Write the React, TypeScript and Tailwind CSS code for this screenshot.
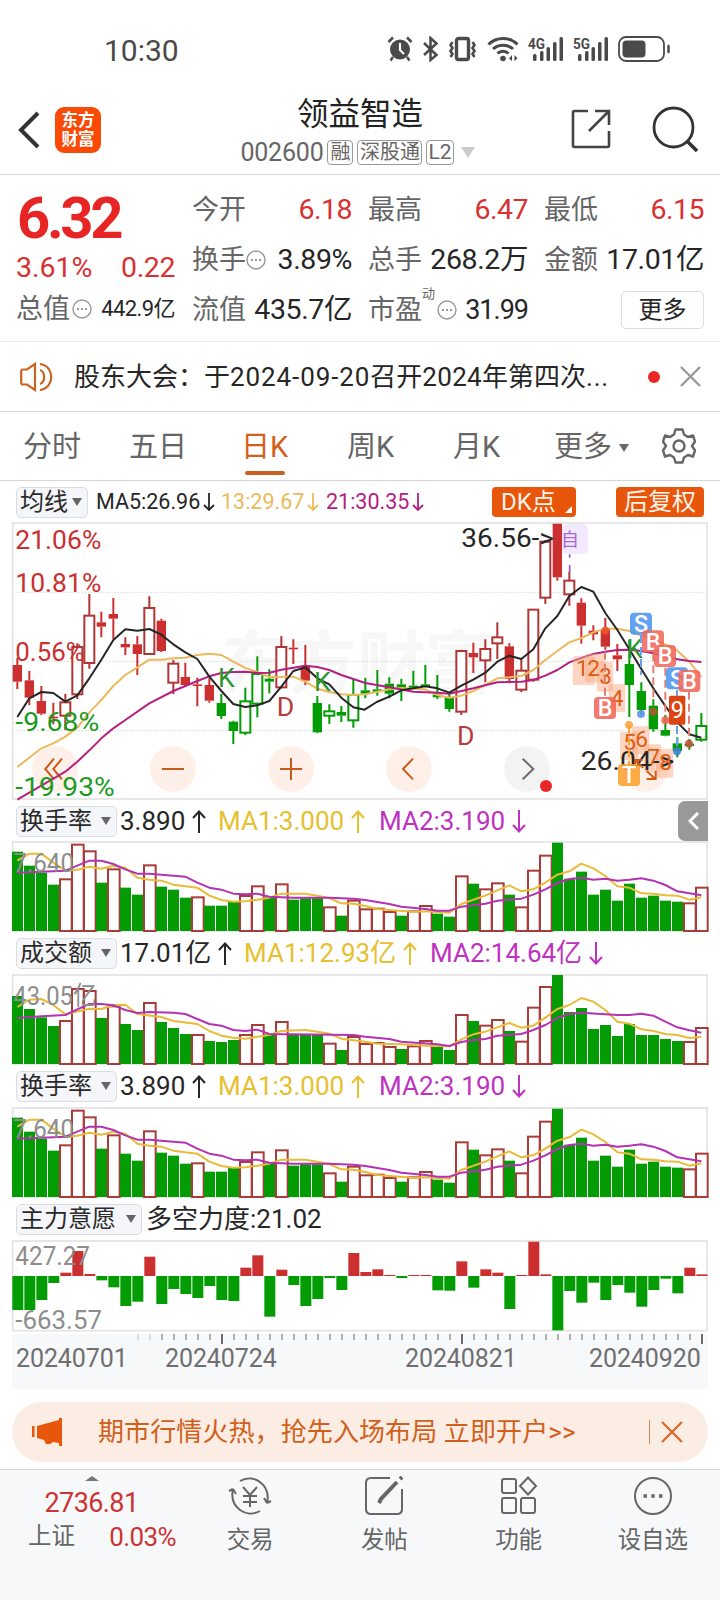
import type { ReactNode } from 'react';

const RED = '#cc2f2f';
const HOLLOW_RED = '#a83c3a';
const GREEN = '#049c04';

// Drawing units: three per pixel, one slot of 36 per trading day
const STEP = 36;
const FIRST = 52;

type Kind = 'r' | 'R' | 'g' | 'G';
type Candle = [number, number, number, number, Kind];

// high, body top, body bottom, low; capital kind = hollow body
const candles: Candle[] = [
  [428, 450, 500, 522, 'r'], [468, 496, 548, 570, 'r'], [513, 558, 596, 600, 'r'], [563, 605, 610, 628, 'r'],
  [537, 562, 602, 645, 'R'], [385, 396, 538, 552, 'R'], [237, 302, 444, 461, 'R'], [290, 322, 335, 367, 'r'],
  [249, 297, 311, 372, 'r'], [367, 387, 397, 420, 'r'], [363, 388, 417, 480, 'r'], [244, 279, 417, 418, 'R'],
  [311, 317, 408, 411, 'r'], [435, 446, 503, 537, 'R'], [443, 486, 510, 514, 'r'], [488, 508, 513, 574, 'r'],
  [490, 510, 557, 563, 'r'], [537, 564, 603, 612, 'g'], [617, 620, 648, 687, 'g'], [518, 559, 653, 660, 'G'],
  [424, 477, 566, 607, 'G'], [463, 491, 500, 535, 'g'], [363, 396, 517, 520, 'R'], [373, 398, 403, 447, 'r'],
  [390, 455, 497, 510, 'r'], [543, 564, 652, 655, 'g'], [568, 589, 602, 627, 'G'], [573, 591, 602, 621, 'g'],
  [490, 540, 616, 638, 'G'], [488, 526, 536, 550, 'g'], [465, 523, 531, 542, 'g'], [487, 506, 536, 550, 'g'],
  [491, 508, 519, 558, 'g'], [467, 512, 519, 521, 'g'], [450, 508, 514, 517, 'g'], [480, 539, 547, 552, 'g'],
  [535, 546, 582, 590, 'g'], [404, 408, 590, 600, 'R'], [383, 414, 427, 474, 'r'], [373, 402, 436, 502, 'R'],
  [322, 367, 385, 432, 'R'], [385, 394, 492, 505, 'r'], [430, 467, 524, 531, 'R'], [282, 284, 494, 500, 'R'],
  [75, 80, 248, 267, 'R'], [26, 26, 187, 197, 'r'], [170, 197, 238, 272, 'R'], [250, 263, 332, 386, 'r'],
  [331, 347, 358, 376, 'r'], [309, 343, 395, 404, 'r'], [387, 421, 433, 468, 'r'], [375, 447, 510, 606, 'g'],
  [502, 528, 585, 600, 'g'], [553, 572, 643, 650, 'g'], [600, 645, 662, 664, 'g'], [667, 685, 708, 727, 'g'],
  [672, 686, 693, 704, 'g'], [594, 633, 674, 680, 'G'],
];

const ma5 =
  '52,606 88,550 124,531 160,534 196,560 232,541 268,490 304,434 340,375 376,343 412,347 448,342 484,359 520,388 556,412 592,432 628,485 664,528 700,567 736,576 772,571 808,558 844,515 880,468 916,457 952,490 988,508 1024,548 1060,577 1094,584 1130,561 1168,545 1204,526 1240,520 1276,514 1312,520 1348,533 1384,512 1420,494 1456,473 1492,440 1528,422 1564,432 1600,403 1636,340 1672,303 1708,243 1744,216 1780,230 1816,294 1852,345 1888,403 1924,462 1960,520 1996,573 2032,622 2068,658 2104,668';
const ma13 =
  '52,756 124,700 160,685 196,665 232,638 268,592 304,555 340,513 376,480 412,457 448,434 484,434 520,430 556,428 592,420 628,416 664,420 700,440 736,459 772,471 808,486 880,485 916,500 952,521 988,531 1024,538 1060,540 1096,538 1168,523 1204,519 1276,523 1312,540 1348,548 1384,542 1420,528 1492,490 1528,487 1564,483 1600,465 1636,435 1672,408 1708,382 1744,369 1780,352 1816,341 1852,341 1888,348 1924,362 1996,388 2032,407 2068,440 2104,486';
const ma21 =
  '52,854 196,770 232,740 268,706 304,670 340,640 376,615 448,565 520,528 592,498 628,484 664,474 700,471 736,470 772,474 808,473 844,464 880,458 916,452 952,456 988,465 1024,480 1096,504 1168,517 1240,530 1312,533 1348,536 1420,520 1492,502 1564,500 1600,495 1636,482 1672,465 1708,442 1744,429 1780,417 1816,410 1852,405 1888,404 1924,408 1960,415 1996,425 2032,433 2068,438 2104,441';

const volumeKinds = 'ggggRRRgRggRgggRgggRRgRgggRgRRRRgRRggRgRRgRRRgggggggggggRR';

const turnoverTops = [
  171, 213, 234, 270, 254, 150, 170, 264, 224, 279, 300, 212, 276, 285, 309, 308, 333, 333, 322, 304, 275, 307, 269, 315,
  311, 311, 338, 363, 318, 344, 342, 352, 363, 350, 334, 357, 366, 245, 267, 284, 266, 300, 338, 228, 183, 144, 252, 231,
  300, 285, 318, 267, 309, 303, 318, 321, 326, 279,
];
const turnoverMa1 =
  '52,198 88,177 124,177 160,204 196,228 232,225 268,216 304,222 340,213 376,219 412,249 448,255 484,258 520,270 556,275 592,279 628,303 664,316 700,321 736,320 772,315 808,309 844,297 916,297 952,303 988,310 1024,326 1060,327 1096,334 1132,343 1168,346 1240,351 1276,350 1348,354 1384,328 1456,303 1492,287 1528,272 1564,290 1600,284 1636,264 1672,240 1708,230 1744,207 1780,221 1816,244 1852,275 1888,279 1924,296 1960,297 1996,302 2032,303 2068,315 2104,308';
const turnoverMa2 =
  '52,234 196,228 232,213 268,198 304,198 340,208 376,224 412,237 448,237 556,246 592,264 628,279 664,285 700,297 736,299 772,297 808,306 880,309 988,309 1060,312 1096,316 1132,322 1168,328 1204,336 1276,343 1312,348 1348,348 1384,336 1420,332 1456,327 1492,318 1564,312 1600,300 1636,284 1672,265 1708,253 1744,249 1780,255 1816,252 1852,258 1888,255 1924,251 1960,258 1996,271 2032,290 2104,302';

const amountTops = [
  603, 642, 667, 693, 678, 582, 588, 669, 634, 687, 705, 624, 681, 699, 717, 720, 738, 741, 735, 720, 690, 718, 681, 718,
  718, 719, 746, 765, 726, 747, 744, 756, 762, 754, 738, 756, 765, 660, 678, 692, 675, 708, 740, 638, 576, 540, 651, 639,
  702, 690, 723, 687, 720, 720, 732, 738, 741, 699,
];
const amountMa1 =
  '52,636 88,614 124,612 160,630 196,658 268,641 304,642 340,630 376,629 412,657 484,666 520,678 592,687 628,708 664,722 700,728 736,731 808,720 844,708 916,705 952,710 988,716 1024,731 1096,740 1132,746 1204,748 1276,752 1348,754 1384,733 1420,718 1456,710 1492,697 1528,684 1564,698 1600,692 1636,668 1672,642 1708,630 1744,609 1780,620 1816,645 1852,680 1888,686 1924,703 1960,708 1996,717 2032,720 2068,729 2104,725';
const amountMa2 =
  '52,669 124,664 196,660 232,643 268,627 304,627 340,631 376,645 412,654 448,651 520,653 556,657 592,672 628,687 664,692 700,705 736,708 772,704 808,717 1060,720 1096,725 1168,732 1204,740 1312,748 1348,753 1384,741 1420,735 1456,732 1492,722 1564,717 1600,705 1636,690 1672,669 1708,657 1744,653 1852,660 1888,660 1924,656 1960,662 1996,680 2032,697 2068,706 2104,713';

const forceEnds = [
  330, 330, 300, 249, 218, 153, 222, 241, 262, 318, 305, 170, 312, 267, 282, 294, 258, 300, 303, 203, 166, 350, 209, 255,
  318, 297, 234, 270, 159, 216, 208, 225, 234, 225, 225, 271, 272, 184, 263, 208, 218, 327, 225, 125, 223, 391, 273, 308,
  248, 300, 255, 278, 320, 270, 236, 280, 203, 223,
];

function Frame({ y, height }: { y: number; height: number }) {
  return <rect x={38} y={y} width={2083} height={height} fill="none" stroke="#e3e3e3" strokeWidth={5} />;
}

function Label({ x, y, w, size = 80, fill, children }: { x: number; y: number; w?: number; size?: number; fill: string; children: string }) {
  return (
    <text x={x} y={y} fill={fill} fontSize={size} textLength={w} lengthAdjust="spacingAndGlyphs">
      {children}
    </text>
  );
}

function Badge({ x, y, fill, children }: { x: number; y: number; fill: string; children: string }) {
  return (
    <g>
      <rect x={x} y={y} width={66} height={66} rx={12} fill={fill} opacity={0.88} />
      <text x={x + 33} y={y + 58} fill="#fff" fontSize={70} fontWeight={500} textAnchor="middle">
        {children}
      </text>
    </g>
  );
}

function Line({ points, color, width = 6 }: { points: string; color: string; width?: number }) {
  return <polyline points={points} fill="none" stroke={color} strokeWidth={width} strokeLinejoin="round" />;
}

const counts: [number, number, number, number, string][] = [
  [1718, 424, 66, 86, '1'],
  [1755, 416, 60, 86, '2'],
  [1790, 440, 50, 90, '3'],
  [1826, 508, 50, 84, '4'],
  [1860, 650, 54, 84, '5'],
  [1896, 634, 52, 84, '6'],
  [1932, 688, 52, 84, '7'],
  [1968, 702, 52, 86, '8'],
];

const countText: [number, number][] = [
  [1728, 484], [1762, 482], [1798, 508], [1832, 572], [1870, 706], [1906, 696], [1942, 750], [1978, 766],
];

const dots: [number, number, string][] = [
  [1816, 347, '#f0502f'],
  [1887, 630, '#fda43a'],
  [1923, 597, '#5b97e8'],
  [1960, 590, '#b4572f'],
  [1996, 616, '#ea6a55'],
  [2031, 709, '#3b84d8'],
  [2067, 686, '#c0563c'],
];

function KLineChart() {
  return (
    <svg className="block h-[276px] w-[696px] overflow-visible" viewBox="36 24 2088 828">
      <text x={664} y={520} fontSize={205} fontWeight={700} fill="#f7f7f7" textLength={815}>东方财富</text>
      {[232, 439, 647].map((y) => (
        <line key={y} x1={38} x2={2121} y1={y} y2={y} stroke="#d4d4d4" strokeWidth={3} strokeDasharray="4 5" />
      ))}
      <Frame y={24} height={828} />
      {[165, 519, 873, 1227, 1581, 1935].map((cx) => (
        <circle key={cx} cx={cx} cy={762} r={69} fill={cx === 1581 ? '#f3f3f3' : '#fef0e8'} />
      ))}

      {candles.map(([high, top, bottom, low, kind], i) => {
        const x = FIRST + i * STEP;
        const hollow = kind === 'R' || kind === 'G';
        const color = kind === 'R' ? '#b03535' : kind === 'r' ? RED : GREEN;
        return (
          <g key={i} stroke={color}>
            <path d={`M${x} ${high}V${top}M${x} ${bottom}V${low}`} strokeWidth={6} />
            {hollow ? (
              <rect x={x - 15} y={top} width={30} height={bottom - top} fill="#fff" strokeWidth={6} />
            ) : (
              <rect x={x - 14} y={top} width={28} height={bottom - top} fill={color} stroke="none" />
            )}
          </g>
        );
      })}

      <g fill="none" stroke="#c85a1d" strokeWidth={6}>
        <path d="M162 731L136 762L162 793M186 731L160 762L186 793" />
        <path d="M486 762H552" />
        <path d="M840 762H906M873 729V795" />
        <path d="M1239 731L1209 762L1239 793" />
        <path d="M1568 731L1600 762L1568 793" stroke="#6b6b6b" />
      </g>
      <circle cx={1638} cy={813} r={18} fill="#ea2626" />

      <Line points={ma13} color="#ecb95c" />
      <Line points={ma21} color="#b5207f" />
      <Line points={ma5} color="#262626" />

      <Label x={46} y={101} w={258} fill={RED}>21.06%</Label>
      <Label x={46} y={230} w={258} fill={RED}>10.81%</Label>
      <Label x={46} y={437} w={208} fill={RED}>0.56%</Label>
      <Label x={46} y={648} w={252} fill="#1c9a1c">-9.68%</Label>
      <Label x={46} y={842} w={298} fill="#1c9a1c">-19.93%</Label>

      <Label x={654} y={515} fill="#2a962a">K</Label>
      <Label x={942} y={527} fill="#2a962a">K</Label>
      <Label x={1880} y={430} size={76} fill="#2a962a">K</Label>
      <Label x={830} y={603} fill="#b83a3a">D</Label>
      <Label x={1371} y={690} fill="#b83a3a">D</Label>

      <rect x={1686} y={27} width={78} height={90} rx={16} fill="#f3e9fe" />
      <Label x={1683} y={93} size={54} fill="#a367d6">自</Label>
      <path d="M1709 118V128M1709 150V172" stroke="#9558c0" strokeWidth={5} />
      <Label x={1384} y={96} w={278} fill="#262626">{'36.56->'}</Label>

      {counts.map(([x, y, w, h, n]) => (
        <rect key={n} x={x} y={y} width={w} height={h} rx={6} fill="#fbab86" opacity={0.5} />
      ))}
      <Label x={1742} y={765} w={281} fill="#262626">{'26.04->'}</Label>
      {counts.map(([, , , , n], i) => (
        <Label key={n} x={countText[i][0]} y={countText[i][1]} size={68} fill="#dd5c12">{n}</Label>
      ))}

      <g strokeWidth={6} strokeDasharray="24 12" fill="none">
        <path d="M1815 410V545M1960 415V560M1996 458V600M2067 530V670" stroke="#e08070" />
        <path d="M1923 360V480M2031 525V700" stroke="#6ba0ec" />
        <path d="M1887 630V748" stroke="#fda43a" />
      </g>
      <g fill="none" stroke="#d85a12" strokeWidth={6}>
        <path d="M1905 756V735H1928M1907 737L1930 758" />
        <path d="M1967 767V792H1940M1940 768L1965 791" />
      </g>

      <Badge x={1890} y={293} fill="#5094f0">S</Badge>
      <Badge x={1926} y={346} fill="#f0685a">B</Badge>
      <Badge x={1962} y={390} fill="#f0685a">B</Badge>
      <Badge x={1998} y={457} fill="#5094f0">S</Badge>
      <Badge x={2035} y={465} fill="#f0685a">B</Badge>
      <Badge x={1782} y={546} fill="#f0685a">B</Badge>
      <Badge x={1854} y={747} fill="#fd9f30">T</Badge>
      <rect x={2007} y={542} width={49} height={87} rx={5} fill="#dc4412" />
      <Label x={2012} y={610} size={70} fill="#fff">9</Label>
      {dots.map(([cx, cy, fill]) => (
        <circle key={cx} cx={cx} cy={cy} r={12} fill={fill} opacity={0.9} />
      ))}
    </svg>
  );
}

interface VolumeChartProps {
  top: number;
  tops: number[];
  ma1: string;
  ma2: string;
  max: string;
  maxWidth: number;
}

function VolumeChart({ top, tops, ma1, ma2, max, maxWidth }: VolumeChartProps) {
  const base = top + 267;
  return (
    <svg className="block h-[89px] w-[696px] overflow-visible" viewBox={`36 ${top} 2088 267`}>
      <Frame y={top} height={267} />
      {tops.map((y, i) => {
        const x = FIRST + i * STEP;
        return volumeKinds[i] === 'R' ? (
          <rect key={i} x={x - 16} y={y} width={35} height={base - y} fill="#fff" stroke={HOLLOW_RED} strokeWidth={6} />
        ) : (
          <rect key={i} x={x - 16} y={y} width={33} height={base - y} fill={GREEN} />
        );
      })}
      <Line points={ma1} color="#e8bb38" />
      <Line points={ma2} color="#b333b3" />
      <Label x={40} y={top + 91} w={maxWidth} size={78} fill="#8d8d8d">{max}</Label>
    </svg>
  );
}

function ForceChart() {
  return (
    <svg className="block h-[90px] w-[696px] overflow-visible" viewBox="36 123 2088 270">
      <Frame y={123} height={269} />
      {forceEnds.map((y, i) => (
        <rect
          key={i}
          x={FIRST - 15 + i * STEP}
          y={Math.min(y, 228)}
          width={33}
          height={Math.abs(y - 228)}
          fill={y < 228 ? RED : GREEN}
        />
      ))}
      <Label x={46} y={195} w={224} size={78} fill="#8d8d8d">427.27</Label>
      <Label x={46} y={388} w={260} size={78} fill="#8d8d8d">-663.57</Label>
    </svg>
  );
}

function Arrow({ down = false }: { down?: boolean }) {
  return (
    <svg className="ml-[7px] h-[23px] w-[14px]" viewBox="0 0 14 23" fill="none" stroke="currentColor" strokeWidth="2">
      {down ? <path d="M7 0V21M1 15L7 21.5L13 15" /> : <path d="M7 23V2M1 8L7 1.5L13 8" />}
    </svg>
  );
}

function Picker({ label, width }: { label: string; width: string }) {
  return (
    <div className={`${width} mr-[3px] flex h-[31px] shrink-0 items-center justify-between rounded-[5px] border border-[#d9dde2] bg-[#f5f6f9] pr-[5px] pl-[3px] text-[24px] leading-none text-[#2a2a2a]`}>
      <span>{label}</span>
      <Triangle />
    </div>
  );
}

function Triangle() {
  return (
    <svg className="h-2 w-[10px]" viewBox="0 0 10 8" fill="#666">
      <path d="M0 0H10L5 8Z" />
    </svg>
  );
}

function IndicatorRow({ children }: { children: ReactNode }) {
  return <div className="flex h-11 items-center pl-1 text-[26px] leading-none text-[#262626]">{children}</div>;
}

function TurnoverRow() {
  return (
    <IndicatorRow>
      <Picker label="换手率" width="w-[101px]" />
      <span className="flex w-[98px] items-center">3.890<Arrow /></span>
      <span className="flex w-[161px] items-center text-[#e6c02e]">MA1:3.000<Arrow /></span>
      <span className="flex items-center text-[#be32c0]">MA2:3.190<Arrow down /></span>
    </IndicatorRow>
  );
}

function MoreDots() {
  return (
    <svg className="h-5 w-5" viewBox="0 0 20 20" fill="none" stroke="#999" strokeWidth="1.4">
      <circle cx="10" cy="10" r="9" />
      <path d="M5 10h2M9 10h2M13 10h2" strokeWidth="2" />
    </svg>
  );
}

function Signal({ label }: { label: string }) {
  return (
    <svg className="h-[26px] w-9 overflow-visible" viewBox="0 0 36 26" fill="#4a4a4a">
      <text x="0" y="13" fontSize="15.5" fontWeight="700" textLength="17" lengthAdjust="spacingAndGlyphs">{label}</text>
      <rect x="5" y="18" width="3.5" height="7" rx="1.5" />
      <rect x="12" y="15" width="3.5" height="10" rx="1.5" />
      <rect x="18.5" y="11" width="3.5" height="14" rx="1.5" />
      <rect x="25" y="6" width="3.5" height="19" rx="1.5" />
      <rect x="31.5" y="1" width="3.5" height="24" rx="1.5" />
    </svg>
  );
}

function StatusBar() {
  return (
    <div className="flex h-[72px] items-start pt-9 pr-[48px] pl-[104px] text-[#4a4a4a]">
      <span className="text-[30px] leading-[29px]">10:30</span>
      <svg className="ml-auto h-[26px] w-[26px]" viewBox="0 0 26 26">
        <circle cx="13" cy="13.5" r="10" fill="#4a4a4a" />
        <path d="M13 7V14L17 18" stroke="#fff" strokeWidth="2.2" fill="none" />
        <path d="M1.5 6L6 1.5M24.5 6L20 1.5M6 21L3.5 24.5M20 21L22.5 24.5" stroke="#4a4a4a" strokeWidth="2.5" />
      </svg>
      <svg className="ml-2.5 h-[26px] w-4" viewBox="0 0 16 26" fill="none" stroke="#4a4a4a" strokeWidth="2.5">
        <path d="M1 7L13.5 19L7.5 24V2L13.5 7.5L1 19" />
      </svg>
      <svg className="ml-2 h-[26px] w-[31px]" viewBox="0 0 31 26" fill="none" stroke="#4a4a4a">
        <rect x="9.5" y="2.5" width="12" height="21" rx="2" strokeWidth="3.4" />
        <path d="M5.5 6L3.5 9L5.5 12L3.5 15L5.5 18L3.5 21M25.5 6L27.5 9L25.5 12L27.500 15L25.5 18L27.5 21" strokeWidth="2.6" />
      </svg>
      <svg className="ml-[9px] h-[26px] w-8" viewBox="0 0 32 26" fill="none" stroke="#4a4a4a" strokeWidth="3">
        <path d="M1.5 8.5C9.5 0.5 22.5 0.5 30.5 8.5M6 13C11.5 8 20.5 8 26 13M10.5 17.5C13.5 14.5 18.5 14.5 21.5 17.5" />
        <circle cx="16" cy="22.5" r="2.8" fill="#4a4a4a" stroke="none" />
        <path d="M22 22.5L25 19V25ZM30.5 22.5L27.5 19V25Z" fill="#4a4a4a" stroke="none" />
      </svg>
      <div className="ml-[9px]"><Signal label="4G" /></div>
      <div className="ml-[9px]"><Signal label="5G" /></div>
      <svg className="ml-[9px] h-[26px] w-[54px]" viewBox="0 0 54 26">
        <rect x="1" y="1" width="45" height="24" rx="7" fill="none" stroke="#4a4a4a" strokeWidth="1.8" />
        <rect x="4.5" y="4.5" width="23" height="17" rx="4" fill="#4a4a4a" />
        <path d="M50.5 10V16" stroke="#4a4a4a" strokeWidth="2.5" strokeLinecap="round" />
      </svg>
    </div>
  );
}

function Header() {
  return (
    <div className="grid h-[103px] grid-cols-[1fr_auto_1fr] items-start border-b border-[#d4d4d4]">
      <div className="flex items-center pt-[35px] pl-[17px]">
        <svg className="h-[38px] w-6" viewBox="0 0 24 38" fill="none" stroke="#333" strokeWidth="4">
          <path d="M21 2L4 19L21 36" />
        </svg>
        <div className="ml-[14px] flex h-[46px] w-[46px] flex-col items-center justify-center rounded-[9px] bg-[#fb4a05] text-[16.5px] leading-[19px] font-bold text-white">
          <span>东方</span>
          <span>财富</span>
        </div>
      </div>
      <div className="flex flex-col items-center">
        <div className="mt-[24px] text-[31.5px] leading-[38px] text-[#222]">领益智造</div>
        <div className="mt-[6px] ml-[-5px] flex items-center text-[25px] leading-none text-[#666]">
          <span className="mr-1 tracking-[-0.2px]">002600</span>
          <span className="mr-1 rounded-[4px] border-[1.5px] border-[#999] px-[2px] text-[20px] leading-[23px]">融</span>
          <span className="mr-1 rounded-[4px] border-[1.5px] border-[#999] px-[1.5px] text-[20px] leading-[23px]">深股通</span>
          <span className="mr-[7px] rounded-[4px] border-[1.5px] border-[#999] px-[1px] text-[21px] leading-[23px]">L2</span>
          <svg className="h-[11px] w-[14px]" viewBox="0 0 14 11" fill="#ccc"><path d="M0 0H14L7 11Z" /></svg>
        </div>
      </div>
      <div className="flex items-center justify-end pt-[34px] pr-[21px]">
        <svg className="h-10 w-10" viewBox="0 0 40 40" fill="none" stroke="#444" strokeWidth="2.6">
          <path d="M17 2H3.5Q2 2 2 3.5V36.5Q2 38 3.5 38H36.5Q38 38 38 36.5V22M24 2H38V16M38 2L18 22" />
        </svg>
        <svg className="ml-[41px] h-[46px] w-[47px]" viewBox="0 0 47 46" fill="none" stroke="#333" strokeWidth="2.8">
          <circle cx="21.5" cy="21.5" r="19.5" />
          <path d="M35 35L45 45" strokeWidth="3.5" />
        </svg>
      </div>
    </div>
  );
}

function Stat({ label, value, up = false, dots = false }: { label: string; value: string; up?: boolean; dots?: boolean }) {
  return (
    <div className="flex items-center justify-between">
      <span className="flex items-center text-[27px] text-[#666]">
        {label}
        {dots && <MoreDots />}
      </span>
      <span className={up ? 'text-[28.5px] tracking-[-0.5px] text-[#d93030]' : 'text-[28.5px] tracking-[-0.4px] text-[#262626]'}>{value}</span>
    </div>
  );
}

function Quote() {
  return (
    <div className="flex h-[167px] justify-between border-b border-[#e8e8e8] pr-4 pl-[17px] leading-none whitespace-nowrap">
      <div className="w-[158px]">
        <div className="mt-[13px] text-[58px] leading-[60px] font-bold tracking-[-3.4px] text-[#e82525]">6.32</div>
        <div className="mt-[3px] ml-[-1px] flex h-[34px] items-center justify-between text-[28.5px] text-[#d93030]">
          <span>3.61%</span>
          <span className="tracking-[-0.4px]">0.22</span>
        </div>
        <div className="mt-[7px] ml-[-1px] flex h-[34px] items-center">
          <span className="mr-[2px] text-[27px] text-[#666]">总值</span>
          <MoreDots />
          <span className="ml-auto text-[22px] tracking-[-0.6px] text-[#262626]">442.9亿</span>
        </div>
      </div>
      <div className="grid h-[152px] w-[512px] grid-cols-[160px_160px_160px] grid-rows-[50px_50px_50px] justify-between pt-[10px]">
        <Stat label="今开" value="6.18" up />
        <Stat label="最高" value="6.47" up />
        <Stat label="最低" value="6.15" up />
        <Stat label="换手" value="3.89%" dots />
        <Stat label="总手" value="268.2万" />
        <Stat label="金额" value="17.01亿" />
        <Stat label="流值" value="435.7亿" />
        <div className="flex items-center justify-between">
          <span className="flex items-center text-[27px] text-[#666]">
            市盈
            <sup className="mb-[20px] text-[13px]">动</sup>
            <span className="ml-[2px]"><MoreDots /></span>
          </span>
          <span className="text-[27px] tracking-[-1px] text-[#262626]">31.99</span>
        </div>
        <div className="flex items-center justify-end">
          <div className="flex h-[38px] w-[83px] items-center justify-center rounded-[5px] border-[1.5px] border-[#ddd] text-[24px] text-[#262626]">更多</div>
        </div>
      </div>
    </div>
  );
}

function Notice() {
  return (
    <div className="flex h-[70px] items-center border-b border-[#d6d6d6] pr-[19px] pl-5 text-[26px] leading-none whitespace-nowrap text-[#262626]">
      <svg className="h-[30px] w-[34px]" viewBox="0 0 34 30" fill="none" stroke="#c96520" strokeWidth="2.2">
        <path d="M15 2L7 7.5H3Q1.200 7.5 1.200 9.5V20.5Q1.200 22.5 3 22.5H7L15 28Z" />
        <path d="M20 8C25.5 10 25.5 20 20 22M20 2C35 4 35 26 20 28" />
      </svg>
      <span className="ml-[20px]">
        股东大会：于<span className="tracking-[0.9px]">2024-09-20</span>召开<span className="tracking-[0.3px]">2024</span>年第四次<span className="tracking-[0.8px]">...</span>
      </span>
      <span className="ml-auto h-3 w-3 rounded-full bg-[#ea2626]" />
      <svg className="ml-5 h-[21px] w-[21px]" viewBox="0 0 21 21" stroke="#999" strokeWidth="2.4">
        <path d="M1 1L20 20M20 1L1 20" />
      </svg>
    </div>
  );
}

function Tabs() {
  return (
    <div className="flex h-[69px] items-center border-b border-[#d6d6d6] pt-[3px] pr-6 pl-[23px] text-[29px] leading-none whitespace-nowrap text-[#666]">
      <span className="w-[106px]">分时</span>
      <span className="w-[112px]">五日</span>
      <span className="relative w-[106px] text-[#d2601a]">
        日K
        <span className="absolute -bottom-[13px] left-[4px] h-1 w-[40px] rounded-full bg-[#c95f22]" />
      </span>
      <span className="w-[106px]">周K</span>
      <span className="w-[101px]">月K</span>
      <span className="mr-[7px]">更多</span>
      <Triangle />
      <svg className="mt-[-3px] ml-auto h-[36px] w-[34px]" viewBox="0 0 34 36" fill="none" stroke="#666" strokeWidth="2.4" strokeLinejoin="round">
        <path d="M13.5 1.5H20.5L22 6.5L26 9L31 7.5L33 13.5L30 18L33 22.5L31 28.5L26 27L22 29.5L20.5 34.5H13.5L12 29.5L8 27L3 28.5L1 22.5L4 18L1 13.5L3 7.5L8 9L12 6.5Z" />
        <circle cx="17" cy="18" r="5.5" />
      </svg>
    </div>
  );
}

function MaRow() {
  return (
    <div className="flex h-[42px] items-center pr-4 pl-4 text-[21.5px] leading-none whitespace-nowrap">
      <Picker label="均线" width="w-[72px]" />
      <span className="ml-[5px] flex w-[125px] items-center text-[#262626]">MA5:26.96<SmallArrow /></span>
      <span className="flex w-[105px] items-center text-[#ecba5c]">13:29.67<SmallArrow /></span>
      <span className="flex items-center text-[#b5207f]">21:30.35<SmallArrow /></span>
      <div className="relative ml-auto flex h-[30px] w-[84px] items-center rounded-[4px] bg-[#e8560b] pl-[9px] text-[24px] text-[#fff3ea]">
        DK点
        <svg className="absolute right-[4px] bottom-[4px] h-[7px] w-[7px]" viewBox="0 0 7 7" fill="#fff"><path d="M7 0V7H0Z" /></svg>
      </div>
      <div className="ml-10 flex h-[30px] w-[88px] items-center justify-center rounded-[4px] bg-[#e8560b] text-[24px] text-[#fff3ea]">后复权</div>
    </div>
  );
}

function SmallArrow() {
  return (
    <svg className="ml-[3px] h-[18px] w-3" viewBox="0 0 12 18" fill="none" stroke="currentColor" strokeWidth="1.8">
      <path d="M6 0V17M1 12L6 17L11 12" />
    </svg>
  );
}

const ticks = Array.from({ length: 48 }, (_, i) => i);

function TimeAxis() {
  return (
    <div className="mt-[3px] h-[55px] bg-[#f7f8fa] text-[25px] leading-none tracking-[-0.1px] text-[#6f6f6f]">
      <svg className="block h-[10px] w-full" viewBox="0 0 696 10">
        {ticks.map((i) => {
          const major = i === 7 || i === 27 || i === 47;
          return <rect key={i} x={125 + i * 12} y={0} width={2} height={major ? 10 : 6} fill={major ? '#6b6b6b' : i < 2 ? '#ddd' : '#b0b0b0'} />;
        })}
      </svg>
      <div className="mt-[2px] flex pl-1">
        <span className="w-[149px]">20240701</span>
        <span className="w-[240px]">20240724</span>
        <span className="w-[184px]">20240821</span>
        <span>20240920</span>
      </div>
    </div>
  );
}

function Banner() {
  return (
    <div className="mt-[13px] flex h-[60px] items-center rounded-full bg-[#fcede4] pr-[25px] pl-5 text-[26px] leading-none whitespace-nowrap text-[#d2601a]">
      <svg className="h-[28px] w-[31px]" viewBox="0 0 31 28" fill="#e8560b">
        <path d="M0 8H2.5V19H0ZM5 8L27 2V0H30V28H27V25L21 24L18 26H14L12 22L5 20Z" />
      </svg>
      <span className="ml-[35px] tracking-[0.1px]">期市行情火热，抢先入场布局 立即开户&gt;&gt;</span>
      <span className="ml-auto h-6 w-[1.5px] bg-[#c98a5c]" />
      <svg className="ml-[11px] h-[22px] w-[22px]" viewBox="0 0 22 22" stroke="#d9662a" strokeWidth="2.2">
        <path d="M1 1L21 21M21 1L1 21" />
      </svg>
    </div>
  );
}

function NavItem({ label, children }: { label: string; children: ReactNode }) {
  return (
    <div className="flex flex-1 flex-col items-center pt-[6px]">
      <svg className="h-10 w-11" viewBox="0 0 44 40" fill="none" stroke="#666" strokeWidth="2">
        {children}
      </svg>
      <span className="mt-[10px] text-[23.5px] leading-[28px]">{label}</span>
    </div>
  );
}

function Footer() {
  return (
    <div className="mt-[7px] flex h-[131px] border-t border-[#d2d3d5] bg-[#f7f8fa] leading-none text-[#666]">
      <div className="flex w-[183px] flex-col items-center">
        <svg className="mt-[6px] h-[5px] w-[14px]" viewBox="0 0 14 5" fill="#777"><path d="M7 0L14 5H0Z" /></svg>
        <span className="mt-[8px] text-[27px] leading-[28px] tracking-[-0.6px] text-[#cc3333]">2736.81</span>
        <div className="mt-[6px] flex h-7 w-full items-center justify-between pr-[7px] pl-7">
          <span className="text-[23.5px]">上证</span>
          <span className="text-[26px] tracking-[-0.6px] text-[#cc3333]">0.03%</span>
        </div>
      </div>
      <NavItem label="交易">
        <path d="M12 5C26-3 43 9 39 27M39 27L36 22M39 27L43 25M32 35C18 43 1 31 5 13M5 13L1 15M5 13L8 18" />
        <path d="M15 11L22 19L29 11M15 20H29M15 26H29M22 19V31" />
      </NavItem>
      <NavItem label="发帖">
        <path d="M28 2H9Q4 2 4 7V33Q4 38 9 38H35Q40 38 40 33V13" />
        <path d="M35 6L19 23L17 27M38 3L40 1" strokeWidth="4" />
      </NavItem>
      <NavItem label="功能">
        <rect x="5" y="3" width="14" height="14" rx="2" />
        <path d="M31 1.5L39 10L31 18.5L23 10Z" />
        <rect x="5" y="22" width="14" height="15" rx="2" />
        <rect x="24" y="22" width="14" height="15" rx="2" />
      </NavItem>
      <NavItem label="设自选">
        <circle cx="22" cy="20" r="18" />
        <path d="M12.5 20H16M20.3 20H23.7M28 20H31.5" strokeWidth="3.5" />
      </NavItem>
    </div>
  );
}

export default function App() {
  return (
    <div lang="zh-CN" className="h-[1600px] w-[720px] overflow-hidden bg-white font-['Roboto','Noto_Sans_CJK_SC',sans-serif]">
      <StatusBar />
      <Header />
      <Quote />
      <Notice />
      <Tabs />
      <MaRow />
      <div className="px-3">
        <KLineChart />
        <div className="relative -mb-px">
          <TurnoverRow />
          <div className="absolute top-[2px] right-0 flex h-[40px] w-[30px] items-center justify-center rounded-l-[7px] bg-[#999]">
            <svg className="h-[18px] w-[11px]" viewBox="0 0 11 18" fill="none" stroke="#fff" strokeWidth="3"><path d="M10 1L2 9L10 17" /></svg>
          </div>
        </div>
        <VolumeChart top={142} tops={turnoverTops} ma1={turnoverMa1} ma2={turnoverMa2} max="7.640" maxWidth={182} />
        <IndicatorRow>
          <Picker label="成交额" width="w-[101px]" />
          <span className="flex w-[124px] items-center">17.01亿<Arrow /></span>
          <span className="flex w-[186px] items-center text-[#e6c02e]">MA1:12.93亿<Arrow /></span>
          <span className="flex items-center text-[#be32c0]">MA2:14.64亿<Arrow down /></span>
        </IndicatorRow>
        <VolumeChart top={540} tops={amountTops} ma1={amountMa1} ma2={amountMa2} max="43.05亿" maxWidth={250} />
        <TurnoverRow />
        <VolumeChart top={142} tops={turnoverTops} ma1={turnoverMa1} ma2={turnoverMa2} max="7.640" maxWidth={182} />
        <IndicatorRow>
          <Picker label="主力意愿" width="w-[126px]" />
          <span className="ml-px">多空力度:21.02</span>
        </IndicatorRow>
        <ForceChart />
        <TimeAxis />
        <Banner />
      </div>
      <Footer />
    </div>
  );
}
